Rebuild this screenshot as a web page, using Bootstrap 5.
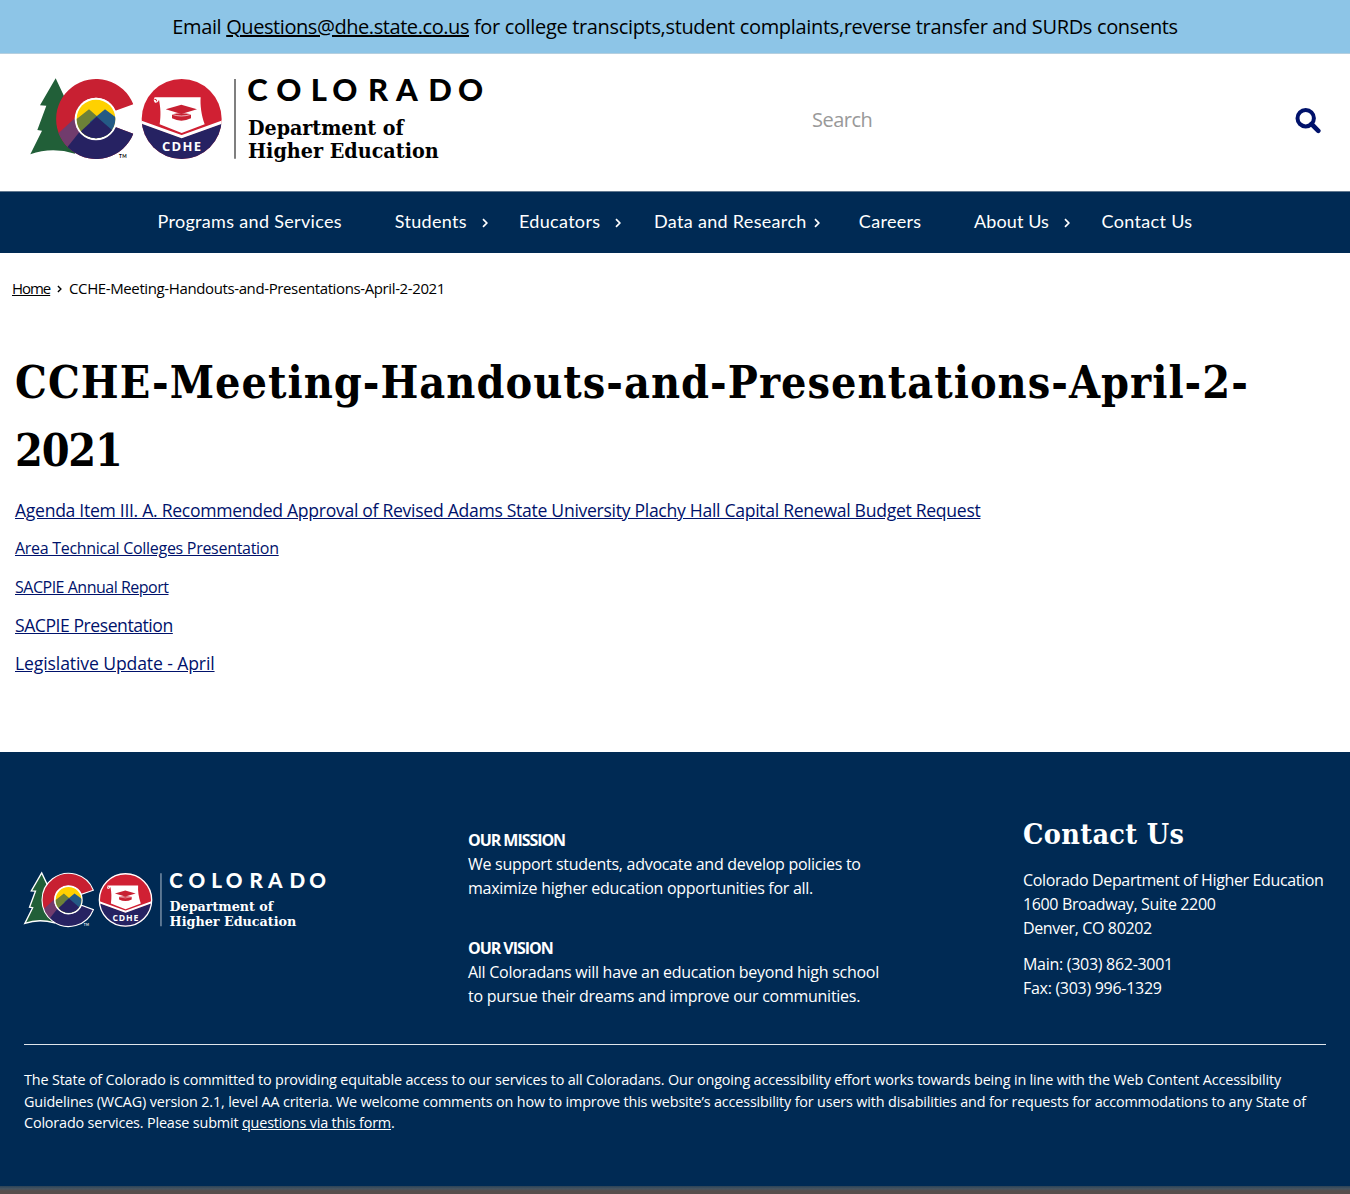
<!DOCTYPE html>
<html lang="en">
<head>
<meta charset="utf-8">
<meta name="viewport" content="width=device-width, initial-scale=1">
<title>CCHE-Meeting-Handouts-and-Presentations-April-2-2021</title>
<link href="https://cdn.jsdelivr.net/npm/bootstrap@5.3.0/dist/css/bootstrap.min.css" rel="stylesheet">
<style>
body{font-family:"Open Sans","Noto Sans",sans-serif;font-size:16px;line-height:24px;letter-spacing:-.29px;color:#000;background:#fff}
a{color:inherit;text-underline-offset:1px}
.alert-strip{height:54px;background:#8dc5e7;font-size:20px;letter-spacing:-.335px;border-bottom:1px solid #b5cfdf}
.alert-strip a{letter-spacing:-.43px}
.sprite{position:absolute;width:0;height:0}
.logo-word{font-family:Lato,sans-serif;font-weight:900;font-size:93px}
.logo-dept{font-family:"DejaVu Serif Condensed","DejaVu Serif",serif;font-weight:700;font-size:61px;letter-spacing:0}
.logo-tm{font-family:Lato,sans-serif;font-weight:700;font-size:14px;letter-spacing:1px}
.logo-seal{font-family:"Open Sans",sans-serif;font-weight:700;font-size:39px;letter-spacing:1px}
.site-head{height:137px;padding:0 30px 0 20px}
.site-logo{display:block;width:480px;height:110px;margin-top:-5px;--edge:none;--ink:#000;--rule:#666}
.foot-logo{display:block;width:319.2px;height:73.2px;--edge:#fff;--ink:#fff;--rule:#9fb0c2}
.search-box{width:508px;margin-top:-5px}
.search-box input{font-size:20px;letter-spacing:-.5px;line-height:30px;background:none}
.search-box input::placeholder{color:#999;opacity:1}
.search-box svg{position:relative;left:.5px;top:.5px}
.main-nav{height:62px;background:#002a54;font-family:Lato,sans-serif;font-size:18px;letter-spacing:.32px;border-top:1px solid #62788f;padding-bottom:3px}
.main-nav ul{padding-left:157.5px}
.main-nav a{color:#fff;text-decoration:none;display:flex;align-items:center;white-space:nowrap}
.main-nav svg{margin:4px 0 0 -2px}
.g1{width:237.3px}.g2{width:124.2px}.g3{width:135px}.g4{width:204.8px}.g5{width:115.3px}.g6{width:127.5px}
.g6 span{letter-spacing:.1px}
.crumbs{height:70px;padding-left:12px;font-size:15px;letter-spacing:-.382px}
.crumbs ol{gap:6px}
.crumb-home{letter-spacing:-1.05px;width:38px}
.crumbs svg{margin-top:2px}
h1,h2{font-family:"DejaVu Serif Condensed","DejaVu Serif",serif;font-weight:700}
h1{font-size:44.5px;line-height:67.5px;letter-spacing:1.02px;margin:0}
.year{letter-spacing:-1.2px}
.content{padding:26px 15px 0;height:429px}
.docs{color:#00126b;margin-top:13px}
.docs li{height:38.3px;line-height:27px}
.t-lg{font-size:17.6px;letter-spacing:-.3px}
.t-sp{font-size:17.6px;letter-spacing:-.46px}
.t-up{font-size:17.6px;letter-spacing:-.12px}
.t-ar{letter-spacing:-.488px}
.site-foot{height:434px;background:#002a54;color:#fff;padding:0 24px}
.foot-cols{height:293px;border-bottom:1px solid #dfe5eb}
.col-logo{width:450px;padding-top:111.5px;margin-left:-6px}
.col-mission{width:555px;padding-top:76px;letter-spacing:-.275px}
.col-mission strong{letter-spacing:-1.05px}
.col-mission p+p{margin-top:36px}
.col-contact{padding-top:62px;white-space:nowrap}
.col-contact h2{font-size:28.5px;line-height:40px;letter-spacing:.35px;margin:0 0 14px}
.addr{letter-spacing:-.366px;margin-bottom:12px}
.access{font-size:14.4px;line-height:21.6px;letter-spacing:-.166px;padding-top:24px}
.under-strip{height:8px;background:linear-gradient(#2c4358,#475561 35%,#574e4c 60%,#574e4c)}
</style>
<script src="https://cdn.jsdelivr.net/npm/bootstrap@5.3.0/dist/js/bootstrap.bundle.min.js"></script>
</head>
<body class="overflow-x-hidden">
<svg class="sprite" aria-hidden="true">
<defs>
<clipPath id="cclip"><path d="M340 118A120 120 0 1 0 340 206L286 186A63 63 0 1 1 286 137Z"/></clipPath>
<clipPath id="sun"><circle cx="228" cy="162" r="58"/></clipPath>
<clipPath id="seal"><circle cx="485" cy="162" r="120"/></clipPath>
</defs>
<symbol id="logo" viewBox="0 0 1440 330">
  <path d="M107 40 60 121 79 122 52 195 66 197 31 268Q95 245 165 266L190 120 140 110Z" fill="#215f38" stroke="var(--edge)" stroke-width="6"/>
  <g clip-path="url(#cclip)">
    <path d="M100 30H350V290H100Z" fill="#c82032"/>
    <path d="M100 216 120 200 166 158 200 190 200 260 130 260Z" fill="#713c6d"/>
    <path d="M125 268 185 193 230 150 280 160 360 200 360 300 130 300Z" fill="#262262"/>
  </g>
  <path d="M340 118A120 120 0 1 0 340 206L286 186A63 63 0 1 1 286 137Z" fill="none" stroke="var(--edge)" stroke-width="5"/>
  <circle cx="228" cy="162" r="64" fill="#fff"/>
  <g clip-path="url(#sun)">
    <path d="M160 90H300V240H160Z" fill="#ffd100"/>
    <path d="M150 164 165 166 207 133 250 170 250 240H150Z" fill="#6d8138"/>
    <path d="M210 170 255 133 300 166V240H210Z" fill="#245a85"/>
    <path d="M165 215 230 155 300 216V240H165Z" fill="#262262"/>
  </g>
  <g clip-path="url(#seal)">
    <path d="M360 40H610V290H360Z" fill="#d02033"/>
    <path d="M360 174 485 219 610 174V290H360Z" fill="#262262"/>
    <path d="M360 170 485 215 610 170" fill="none" stroke="#fff" stroke-width="9"/>
    <path d="M404 97H542C540 120 544 150 554 178L485 204 419 178C423 150 422 130 417 104Q414 114 405 113 398 106 404 97Z" fill="#fff"/>
    <path d="M403 103Q410 101 410 109" fill="none" stroke="#d02033" stroke-width="3"/>
    <path d="M437 133 484 119 531 133 484 147Z" fill="#c82032"/>
    <path d="M456 148Q484 142 513 148V160Q484 174 456 160Z" fill="#c82032"/>
    <path d="M456 148Q484 158 513 148" fill="none" stroke="#fff" stroke-width="2"/>
  </g>
  <circle cx="485" cy="162" r="118" fill="none" stroke="var(--edge)" stroke-width="6"/>
  <path d="M645 42V281" stroke="var(--rule)" stroke-width="5"/>
</symbol>
<symbol id="chev" viewBox="0 0 8 10"><path d="M2 1.2 5.8 5 2 8.8" fill="none" stroke="currentColor" stroke-width="1.7"/></symbol>
</svg>

<div class="alert-strip d-flex align-items-center justify-content-center text-nowrap"><span>Email <a href="#">Questions@dhe.state.co.us</a> for college transcipts,student complaints,reverse transfer and SURDs consents</span></div>

<header class="site-head d-flex align-items-center justify-content-between">
  <a href="#"><svg class="site-logo" viewBox="0 0 1440 330" fill="var(--ink)">
    <use href="#logo" width="1440" height="330"/>
    <text class="logo-tm" x="297" y="278">TM</text>
    <text class="logo-seal" x="426" y="257" textLength="118" fill="#fff">CDHE</text>
    <text class="logo-word" x="682 769 872 937 1044 1128 1225 1314" y="109">COLORADO</text>
    <text class="logo-dept" x="684" y="210" textLength="467" lengthAdjust="spacingAndGlyphs">Department of</text>
    <text class="logo-dept" x="684" y="280" textLength="572" lengthAdjust="spacingAndGlyphs">Higher Education</text>
  </svg></a>
  <form class="search-box d-flex align-items-center justify-content-between">
    <input class="border-0 p-0 flex-grow-1" type="text" placeholder="Search">
    <svg width="26" height="26" viewBox="0 0 26 26" fill="none" stroke="#00126b"><circle cx="10.7" cy="10.2" r="8.2" stroke-width="4"/><path d="M16.5 16 23.3 22.8" stroke-width="4.6" stroke-linecap="round"/></svg>
  </form>
</header>

<nav class="main-nav d-flex align-items-center">
  <ul class="list-unstyled d-flex m-0">
    <li class="g1"><a href="#">Programs and Services</a></li>
    <li class="g2"><a href="#"><span class="me-3">Students</span><svg width="8" height="10"><use href="#chev"/></svg></a></li>
    <li class="g3"><a href="#"><span class="me-3">Educators</span><svg width="8" height="10"><use href="#chev"/></svg></a></li>
    <li class="g4"><a href="#"><span class="me-2">Data and Research</span><svg width="8" height="10"><use href="#chev"/></svg></a></li>
    <li class="g5"><a href="#">Careers</a></li>
    <li class="g6"><a href="#"><span class="me-3">About Us</span><svg width="8" height="10"><use href="#chev"/></svg></a></li>
    <li><a href="#">Contact Us</a></li>
  </ul>
</nav>

<div class="crumbs d-flex align-items-center">
  <ol class="list-unstyled d-flex align-items-center m-0">
    <li class="crumb-home"><a href="#">Home</a></li>
    <li class="d-flex"><svg width="7" height="8"><use href="#chev"/></svg></li>
    <li>CCHE-Meeting-Handouts-and-Presentations-April-2-2021</li>
  </ol>
</div>

<main class="content">
  <h1>CCHE-Meeting-Handouts-and-Presentations-April-2-<br><span class="year">2021</span></h1>
  <ul class="docs list-unstyled mb-0">
    <li class="t-lg"><a href="#">Agenda Item III. A. Recommended Approval of Revised Adams State University Plachy Hall Capital Renewal Budget Request</a></li>
    <li><a href="#">Area Technical Colleges Presentation</a></li>
    <li class="t-ar"><a href="#">SACPIE Annual Report</a></li>
    <li class="t-sp"><a href="#">SACPIE Presentation</a></li>
    <li class="t-up"><a href="#">Legislative Update - April</a></li>
  </ul>
</main>

<footer class="site-foot">
  <div class="foot-cols d-flex">
    <div class="col-logo"><svg class="foot-logo" viewBox="0 0 1440 330" fill="var(--ink)">
      <use href="#logo" width="1440" height="330"/>
      <text class="logo-tm" x="297" y="278">TM</text>
      <text class="logo-seal" x="426" y="257" textLength="118">CDHE</text>
      <text class="logo-word" x="682 769 872 937 1044 1128 1225 1314" y="109">COLORADO</text>
      <text class="logo-dept" x="684" y="210" textLength="467" lengthAdjust="spacingAndGlyphs">Department of</text>
      <text class="logo-dept" x="684" y="280" textLength="572" lengthAdjust="spacingAndGlyphs">Higher Education</text>
    </svg></div>
    <div class="col-mission">
      <p class="mb-0"><strong>OUR MISSION</strong><br>We support students, advocate and develop policies to<br>maximize higher education opportunities for all.</p>
      <p class="mb-0"><strong>OUR VISION</strong><br>All Coloradans will have an education beyond high school<br>to pursue their dreams and improve our communities.</p>
    </div>
    <div class="col-contact">
      <h2>Contact Us</h2>
      <p class="addr">Colorado Department of Higher Education<br>1600 Broadway, Suite 2200<br>Denver, CO 80202</p>
      <p class="mb-0">Main: (303) 862-3001<br>Fax: (303) 996-1329</p>
    </div>
  </div>
  <p class="access mb-0 text-nowrap">The State of Colorado is committed to providing equitable access to our services to all Coloradans. Our ongoing accessibility effort works towards being in line with the Web Content Accessibility<br>Guidelines (WCAG) version 2.1, level AA criteria. We welcome comments on how to improve this website’s accessibility for users with disabilities and for requests for accommodations to any State of<br>Colorado services. Please submit <a href="#">questions via this form</a>.</p>
</footer>
<div class="under-strip"></div>
</body>
</html>
